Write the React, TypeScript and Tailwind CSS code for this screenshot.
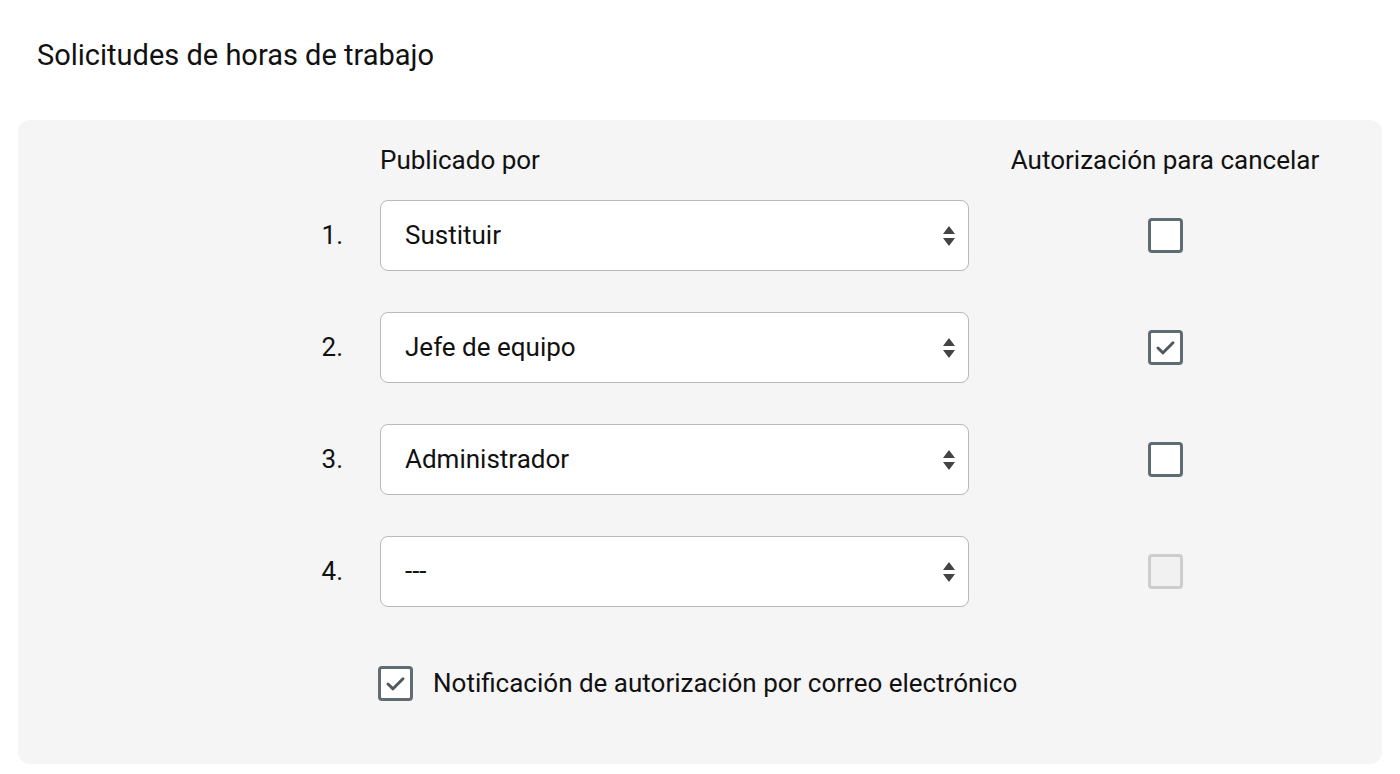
import React from "react";

function Arrows() {
  return (
    <svg width="12" height="20" viewBox="0 0 12 20" className="shrink-0">
      <polygon points="6,0 12,8 0,8" fill="#444" />
      <polygon points="0,12 12,12 6,20" fill="#444" />
    </svg>
  );
}

function Checkbox({ checked, disabled }: { checked?: boolean; disabled?: boolean }) {
  if (disabled) {
    return (
      <div className="w-[35px] h-[35px] rounded-[4px] border-[3px] border-[#cdcdcd] bg-[#f1f1f1]" />
    );
  }
  return (
    <div className="w-[35px] h-[35px] rounded-[4px] border-[3px] border-[#5f6c73] bg-white flex items-center justify-center">
      {checked && (
        <svg width="23" height="23" viewBox="0 0 23 23" className="shrink-0">
          <path d="M4 12 L9 16.8 L19 6.8" fill="none" stroke="#4f585e" strokeWidth="3" strokeLinecap="round" strokeLinejoin="round" />
        </svg>
      )}
    </div>
  );
}

const rows = [
  { n: "1.", label: "Sustituir", checked: false, disabled: false },
  { n: "2.", label: "Jefe de equipo", checked: true, disabled: false },
  { n: "3.", label: "Administrador", checked: false, disabled: false },
  { n: "4.", label: "---", checked: false, disabled: true },
];

export default function App() {
  return (
    <div className="min-h-screen bg-white text-[#111]" style={{ fontFamily: "Roboto, 'Noto Sans', sans-serif" }}>
      <div className="pl-[37px] pt-[37px] text-[29px] leading-[36px]">Solicitudes de horas de trabajo</div>
      <div className="mx-[18px] mt-[47px] rounded-[12px] bg-[#f5f5f5] pt-[24px] pb-[61px] pl-[285px]">
        <div className="flex items-center text-[26px] leading-[32px]">
          <div className="w-[40px]" />
          <div className="ml-[37px] w-[589px]">Publicado por</div>
          <div className="w-[392px] text-center whitespace-nowrap">Autorización para cancelar</div>
        </div>
        <div className="mt-[24px] flex flex-col gap-[41px]">
          {rows.map((r) => (
            <div key={r.n} className="flex items-center text-[26px]">
              <div className="w-[40px] text-right">{r.n}</div>
              <div className="ml-[37px] w-[589px] h-[71px] rounded-[8px] border-[1.5px] border-[#b9b9b9] bg-white flex items-center justify-between pl-[24px] pr-[13px]">
                <span>{r.label}</span>
                <Arrows />
              </div>
              <div className="w-[392px] flex justify-center">
                <Checkbox checked={r.checked} disabled={r.disabled} />
              </div>
            </div>
          ))}
        </div>
        <div className="mt-[57px] ml-[75px] flex items-center gap-[20px] text-[26px]">
          <Checkbox checked />
          <span>Notificación de autorización por correo electrónico</span>
        </div>
      </div>
    </div>
  );
}
